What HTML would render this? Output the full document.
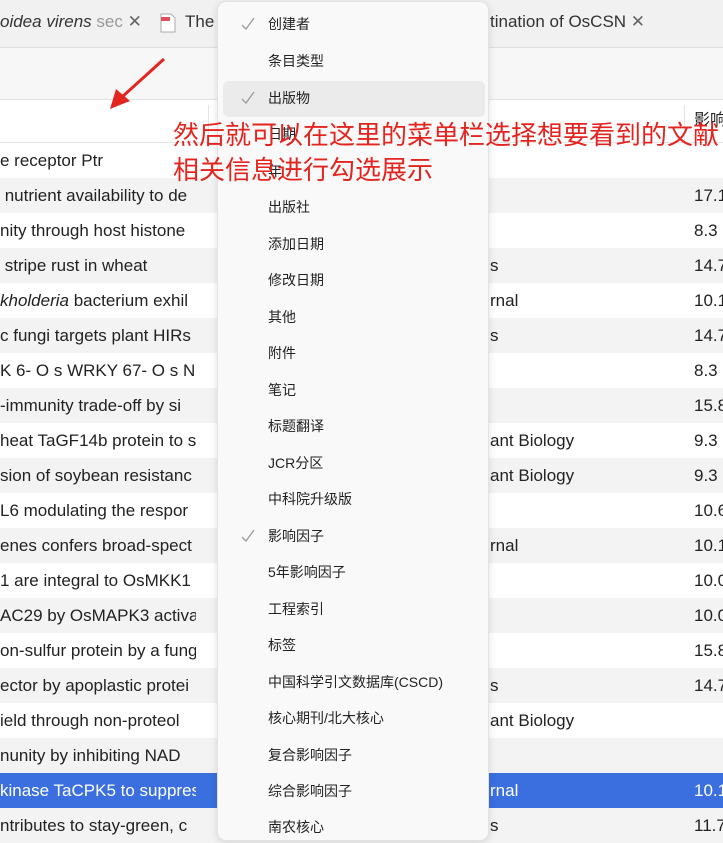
<!DOCTYPE html>
<html><head><meta charset="utf-8"><style>
*{margin:0;padding:0;box-sizing:border-box}
body{width:723px;height:833px;overflow:hidden;position:relative;background:#fff;font-family:"Liberation Sans","Noto Sans CJK SC",sans-serif;color:#222}
.tabs{position:absolute;left:0;top:0;width:723px;height:48px;background:#f1f1f1;border-bottom:1px solid #ddd}
.tb{position:absolute;top:12px;font-size:17px;color:#333;white-space:nowrap}
.tool{position:absolute;left:0;top:48px;width:723px;height:52px;background:#f7f7f7;border-bottom:1px solid #e2e2e2}
.hdr{position:absolute;left:0;top:100px;width:723px;height:43px;background:#fff;border-bottom:1px solid #e6e6e6}
.row{position:absolute;left:0;width:723px;height:35px;font-size:17px;line-height:35px;white-space:nowrap}
.row span{position:absolute}
.g{background:#f3f3f3}
.sel{background:#3b6fdf;color:#fff}
.t{left:0;width:196px;overflow:hidden}
.p{left:490px}
.n{left:694px}
.menu{position:absolute;left:217px;top:1px;width:272px;height:840px;background:#f9f9f9;border:1px solid #e3e3e3;border-radius:9px;box-shadow:0 2px 8px rgba(0,0,0,.12)}
.mi{position:absolute;left:50px;font-size:14px;color:#222;white-space:nowrap}
.ck{position:absolute;left:22px}
.hl{position:absolute;left:5px;top:79px;width:262px;height:36px;background:#ebebeb;border-radius:6px}
.ann{position:absolute;left:173px;font-size:26px;color:#e3241f;white-space:nowrap;font-family:"Noto Sans CJK SC",sans-serif;line-height:34px}
</style></head><body>
<div class="tabs">
<div class="tb" style="left:0"><i>oidea virens</i> <span style="color:#999">sec</span> <span style="color:#666">✕</span></div>
<svg style="position:absolute;left:160px;top:13px" width="16" height="20"><path d="M1 1h10l4 4v14H1z" fill="#fff" stroke="#aaa"/><rect x="1" y="4" width="9" height="4" fill="#e0505a"/></svg>
<div class="tb" style="left:185px">The</div>
<div class="tb" style="left:490px">tination of OsCSN <span style="color:#666">✕</span></div>
</div>
<div class="tool"></div>
<div class="hdr"><div style="position:absolute;left:208px;top:5px;width:1px;height:38px;background:#e4e4e4"></div><div style="position:absolute;left:684px;top:5px;width:1px;height:38px;background:#e4e4e4"></div><span style="position:absolute;left:694px;top:6px;font-size:16px;white-space:nowrap">影响</span></div>

<div class="row" style="top:143px"><span class="t">e receptor Ptr</span></div>
<div class="row g" style="top:178px"><span class="t">&nbsp;nutrient availability to de</span><span class="n">17.1</span></div>
<div class="row" style="top:213px"><span class="t">nity through host histone</span><span class="n">8.3</span></div>
<div class="row g" style="top:248px"><span class="t">&nbsp;stripe rust in wheat</span><span class="p">s</span><span class="n">14.7</span></div>
<div class="row" style="top:283px"><span class="t"><i>kholderia</i> bacterium exhil</span><span class="p">rnal</span><span class="n">10.1</span></div>
<div class="row g" style="top:318px"><span class="t">c fungi targets plant HIRs</span><span class="p">s</span><span class="n">14.7</span></div>
<div class="row" style="top:353px"><span class="t">K 6- O s WRKY 67- O s NO</span><span class="n">8.3</span></div>
<div class="row g" style="top:388px"><span class="t">-immunity trade-off by si</span><span class="n">15.8</span></div>
<div class="row" style="top:423px"><span class="t">heat TaGF14b protein to s</span><span class="p">ant Biology</span><span class="n">9.3</span></div>
<div class="row g" style="top:458px"><span class="t">sion of soybean resistanc</span><span class="p">ant Biology</span><span class="n">9.3</span></div>
<div class="row" style="top:493px"><span class="t">L6 modulating the respor</span><span class="n">10.6</span></div>
<div class="row g" style="top:528px"><span class="t">enes confers broad-spect</span><span class="p">rnal</span><span class="n">10.1</span></div>
<div class="row" style="top:563px"><span class="t">1 are integral to OsMKK1</span><span class="n">10.0</span></div>
<div class="row g" style="top:598px"><span class="t">AC29 by OsMAPK3 activat</span><span class="n">10.0</span></div>
<div class="row" style="top:633px"><span class="t">on-sulfur protein by a fung</span><span class="n">15.8</span></div>
<div class="row g" style="top:668px"><span class="t">ector by apoplastic protei</span><span class="p">s</span><span class="n">14.7</span></div>
<div class="row" style="top:703px"><span class="t">ield through non-proteol</span><span class="p">ant Biology</span></div>
<div class="row g" style="top:738px"><span class="t">nunity by inhibiting NAD</span></div>
<div class="row sel" style="top:773px"><span class="t">kinase TaCPK5 to suppress</span><span class="p">rnal</span><span class="n">10.1</span></div>
<div class="row g" style="top:808px"><span class="t">ntributes to stay-green, c</span><span class="p">s</span><span class="n">11.7</span></div>

<div class="menu">
<div class="hl"></div>
<svg class="ck" style="top:15px" width="16" height="14"><path d="M2 8 L6 12 L14 1" fill="none" stroke="#9a9a9a" stroke-width="1.3"/></svg><span class="mi" style="top:12px">创建者</span>
<span class="mi" style="top:49px">条目类型</span>
<svg class="ck" style="top:89px" width="16" height="14"><path d="M2 8 L6 12 L14 1" fill="none" stroke="#9a9a9a" stroke-width="1.3"/></svg><span class="mi" style="top:86px">出版物</span>
<span class="mi" style="top:122px">日期</span>
<span class="mi" style="top:159px">年</span>
<span class="mi" style="top:195px">出版社</span>
<span class="mi" style="top:232px">添加日期</span>
<span class="mi" style="top:268px">修改日期</span>
<span class="mi" style="top:305px">其他</span>
<span class="mi" style="top:341px">附件</span>
<span class="mi" style="top:378px">笔记</span>
<span class="mi" style="top:414px">标题翻译</span>
<span class="mi" style="top:451px">JCR分区</span>
<span class="mi" style="top:487px">中科院升级版</span>
<svg class="ck" style="top:527px" width="16" height="14"><path d="M2 8 L6 12 L14 1" fill="none" stroke="#9a9a9a" stroke-width="1.3"/></svg><span class="mi" style="top:524px">影响因子</span>
<span class="mi" style="top:560px">5年影响因子</span>
<span class="mi" style="top:597px">工程索引</span>
<span class="mi" style="top:633px">标签</span>
<span class="mi" style="top:670px">中国科学引文数据库(CSCD)</span>
<span class="mi" style="top:706px">核心期刊/北大核心</span>
<span class="mi" style="top:743px">复合影响因子</span>
<span class="mi" style="top:779px">综合影响因子</span>
<span class="mi" style="top:815px">南农核心</span>
</div>

<div class="ann" style="top:117px">然后就可以在这里的菜单栏选择想要看到的文献</div>
<div class="ann" style="top:152px">相关信息进行勾选展示</div>
<svg style="position:absolute;left:100px;top:55px" width="70" height="60"><path d="M64 4 L22 42" stroke="#e3241f" stroke-width="3"/><path d="M10 54 L16 34 L30 46 Z" fill="#e3241f"/></svg>
</body></html>
